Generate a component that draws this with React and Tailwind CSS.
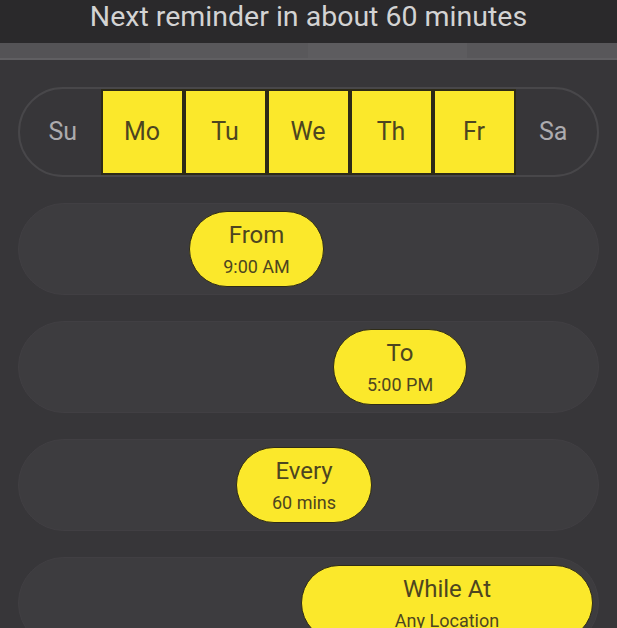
import React from "react";

const days = [
  { label: "Su", on: false },
  { label: "Mo", on: true },
  { label: "Tu", on: true },
  { label: "We", on: true },
  { label: "Th", on: true },
  { label: "Fr", on: true },
  { label: "Sa", on: false },
];

const RowPill = ({ offset, width, title, value }) => (
  <div className="mx-[18px] h-[92px] shrink-0 rounded-full bg-[#3d3c3f] border border-[#413f43] flex items-center">
    <div
      className={`${offset} ${width} h-[76px] shrink-0 rounded-full bg-[#fbe82b] border-[1.5px] border-[#2f2c16] flex flex-col items-center justify-center text-[#4d4520]`}
    >
      <div className="text-[24px] leading-[30px]">{title}</div>
      <div className="text-[18px] leading-[24px] mt-[5px]">{value}</div>
    </div>
  </div>
);

const App = () => {
  return (
    <div
      className="w-full h-[628px] overflow-hidden bg-[#373639] flex flex-col"
      style={{ fontFamily: "Roboto, 'Noto Sans', sans-serif" }}
    >
      {/* header */}
      <div className="h-[43px] shrink-0 bg-[#2a292b] text-center text-[28.5px] leading-[34px] text-[#d3d3d3]">
        Next reminder in about 60 minutes
      </div>
      <div className="shrink-0 flex flex-col">
        <div className="flex h-[15px]">
          <div className="w-[150px] bg-[#545356]" />
          <div className="w-[158px] bg-[#59585b]" />
          <div className="w-[159px] bg-[#5d5c5f]" />
          <div className="flex-1 bg-[#58575a]" />
        </div>
        <div className="h-[2px] bg-[#605f62]" />
      </div>

      <div className="flex flex-col gap-[26px] pt-[27px]">
        {/* days */}
        <div className="mx-[18px] h-[90px] shrink-0 rounded-full border-2 border-[#48474a] flex items-center">
          {days.map((d, i) =>
            d.on ? (
              <div
                key={d.label}
                className="w-[83px] h-[86px] shrink-0 bg-[#fbe82b] border-2 border-[#2d2a17] flex items-center justify-center text-[25px] text-[#4d4520]"
              >
                {d.label}
              </div>
            ) : (
              <div
                key={d.label}
                className={`flex-1 flex items-center justify-center text-[25px] text-[#acabae] ${i === 0 ? "pl-[5px]" : "pr-[6px]"}`}
              >
                {d.label}
              </div>
            )
          )}
        </div>

        <RowPill offset="ml-[170px]" width="w-[135px]" title="From" value="9:00 AM" />
        <RowPill offset="ml-[314px]" width="w-[134px]" title="To" value="5:00 PM" />
        <RowPill offset="ml-[217px]" width="w-[136px]" title="Every" value="60 mins" />
        <RowPill offset="ml-[282px]" width="w-[292px]" title="While At" value="Any Location" />
      </div>
    </div>
  );
};

export default App;
